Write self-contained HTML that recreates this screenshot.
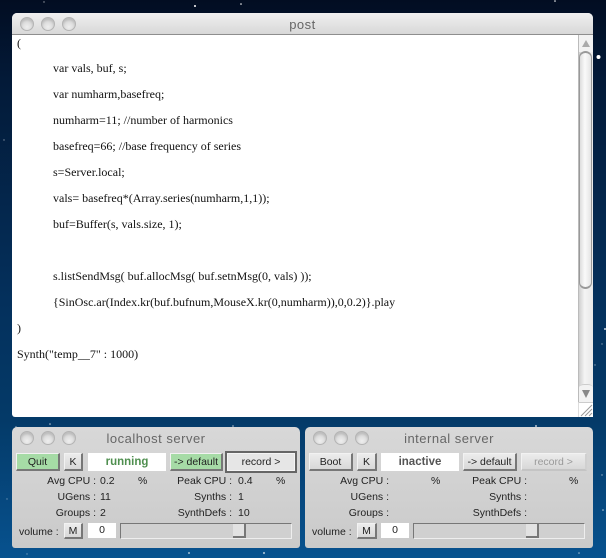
<!DOCTYPE html>
<html>
<head>
<meta charset="utf-8">
<style>
html,body{margin:0;padding:0}
body{width:606px;height:558px;position:relative;overflow:hidden;font-family:"Liberation Sans",sans-serif;background:linear-gradient(180deg,#020d22 0,#031a38 80px,#04305c 300px,#043a68 420px,#07528f 558px)}
div{position:absolute;box-sizing:border-box}
.win{border-radius:5px 5px 3px 3px}
.tb{left:0;right:0;top:0;height:22px;background:linear-gradient(#f0f0f0,#d8d8d8);border-bottom:1px solid #8e8e8e;border-radius:5px 5px 0 0}
.title{left:0;right:0;text-align:center;color:#666;font-size:13px;letter-spacing:.5px;white-space:nowrap}
.dot{width:14px;height:14px;border-radius:50%;background:radial-gradient(circle at 50% 75%,#eeeeee,#d2d2d2 75%);border:1px solid #b4b4b4;box-shadow:inset 0 2px 2px #bbb}
.code{left:17px;font:12px/14px "Liberation Serif",serif;color:#111;white-space:pre}
.srv{height:121px;width:288px;top:427px;border-radius:5px 5px 3px 3px;background:linear-gradient(#d8d8d8,#cacaca)}
.btn{background:linear-gradient(#ececec,#d8d8d8);border-right:2px solid #777;border-bottom:2px solid #777;border-top:1px solid #f2f2f2;border-left:1px solid #f2f2f2;height:18px;font-size:10.500px;line-height:16px;text-align:center;color:#222;white-space:nowrap}
.gr{background:#a6dba6}
.l{font-size:10.500px;line-height:14px;color:#222;white-space:nowrap}
.r{text-align:right;width:120px}
.wh{background:#fff;text-align:center;white-space:nowrap}
</style>
</head>
<body>
<svg style="position:absolute;left:0;top:0" width="606" height="558">
<g fill="#fff">
<circle cx="195" cy="6" r="1" /><circle cx="241" cy="4" r=".8"/><circle cx="44" cy="2" r=".7" opacity=".6"/><circle cx="598.500" cy="57" r="2"/><circle cx="555" cy="1" r=".8"/><circle cx="4" cy="140" r=".7" opacity=".5"/><circle cx="605" cy="329" r="1" opacity=".8"/><circle cx="602" cy="344" r=".7" opacity=".5"/><circle cx="595" cy="365" r=".7" opacity=".5"/><circle cx="50" cy="424" r=".8" opacity=".7"/><circle cx="16" cy="427" r=".7" opacity=".6"/><circle cx="233" cy="426" r=".8" opacity=".7"/><circle cx="536" cy="426" r="1" opacity=".7"/><circle cx="189" cy="553" r=".9" opacity=".8"/><circle cx="264" cy="553" r="1.100" opacity=".6"/><circle cx="579" cy="553" r=".8" opacity=".6"/><circle cx="603" cy="510" r=".8" opacity=".7"/><circle cx="602" cy="475" r=".7" opacity=".6"/><circle cx="7" cy="499" r=".7" opacity=".4"/><circle cx="27" cy="554" r=".7" opacity=".4"/>
</g>
</svg>

<!-- post window -->
<div class="win" style="left:12px;top:13px;width:581px;height:404px;background:#fff">
  <div class="tb"></div>
  <div class="dot" style="left:8px;top:4px"></div>
  <div class="dot" style="left:29px;top:4px"></div>
  <div class="dot" style="left:50px;top:4px"></div>
  <div class="title" style="top:4px">post</div>
</div>
<div class="code" style="top:36px">(</div>
<div class="code" style="top:61px;left:53px">var vals, buf, s;</div>
<div class="code" style="top:87px;left:53px">var numharm,basefreq;</div>
<div class="code" style="top:113px;left:53px">numharm=11; //number of harmonics</div>
<div class="code" style="top:139px;left:53px">basefreq=66; //base frequency of series</div>
<div class="code" style="top:165px;left:53px">s=Server.local;</div>
<div class="code" style="top:191px;left:53px">vals= basefreq*(Array.series(numharm,1,1));</div>
<div class="code" style="top:217px;left:53px">buf=Buffer(s, vals.size, 1);</div>
<div class="code" style="top:269px;left:53px">s.listSendMsg( buf.allocMsg( buf.setnMsg(0, vals) ));</div>
<div class="code" style="top:295px;left:53px">{SinOsc.ar(Index.kr(buf.bufnum,MouseX.kr(0,numharm)),0,0.2)}.play</div>
<div class="code" style="top:321px">)</div>
<div class="code" style="top:347px">Synth("temp__7" : 1000)</div>

<!-- scrollbar -->
<div style="left:578px;top:35px;width:15px;height:367px;background:linear-gradient(90deg,#cfcfcf,#f4f4f4 40%,#e8e8e8);border-left:1px solid #bbb"></div>
<div style="left:579px;top:35px;width:14px;height:17px;background:#f2f2f2"></div>
<svg style="position:absolute;left:579px;top:38px" width="14" height="10"><path d="M7 2 L11 9 L3 9Z" fill="#aaa"/></svg>
<div style="left:579px;top:51px;width:13px;height:238px;border:1px solid #999;border-top:2px solid #999;border-bottom:2px solid #999;border-radius:7px;background:linear-gradient(90deg,#ddd,#fafafa 45%,#e4e4e4)"></div>
<div style="left:579px;top:384px;width:14px;height:18px;background:#f2f2f2;border-top:1px solid #ccc;border-radius:40% 40% 0 0/18% 18% 0 0"></div>
<svg style="position:absolute;left:579px;top:388px" width="14" height="12"><path d="M7 10 L11 2 L3 2Z" fill="#888"/></svg>
<div style="left:578px;top:402px;width:15px;height:15px;background:#fff;border-top:1px solid #ccc;border-left:1px solid #ddd"></div>
<svg style="position:absolute;left:578px;top:402px" width="15" height="15"><path d="M3 14 L14 3 M7 14 L14 7 M11 14 L14 11" stroke="#999" fill="none"/></svg>

<!-- localhost -->
<div class="srv" style="left:12px"></div>
<div class="dot" style="left:20px;top:431px"></div>
<div class="dot" style="left:41px;top:431px"></div>
<div class="dot" style="left:62px;top:431px"></div>
<div class="title" style="left:12px;width:288px;right:auto;top:431px">localhost server</div>
<div class="btn gr" style="left:16px;top:453px;width:44px">Quit</div>
<div class="btn" style="left:64px;top:453px;width:19px">K</div>
<div class="wh" style="left:88px;top:453px;width:78px;height:18px;font:bold 11.500px/18px 'Liberation Sans',sans-serif;color:#4f8f4f">running</div>
<div class="btn gr" style="left:170px;top:453px;width:53px">-&gt; default</div>
<div class="btn" style="left:225px;top:451px;width:72px;height:22px;border:2px solid #666;line-height:18px;background:#e6e6e6;box-shadow:inset 0 0 0 1px #f4f4f4">record &gt;</div>

<div class="l r" style="left:-24px;top:474px">Avg CPU :</div><div class="l" style="left:100px;top:474px">0.2</div><div class="l" style="left:138px;top:474px">%</div>
<div class="l r" style="left:-24px;top:490px">UGens :</div><div class="l" style="left:100px;top:490px">11</div>
<div class="l r" style="left:-24px;top:506px">Groups :</div><div class="l" style="left:100px;top:506px">2</div>
<div class="l r" style="left:112px;top:474px">Peak CPU :</div><div class="l" style="left:238px;top:474px">0.4</div><div class="l" style="left:276px;top:474px">%</div>
<div class="l r" style="left:112px;top:490px">Synths :</div><div class="l" style="left:238px;top:490px">1</div>
<div class="l r" style="left:112px;top:506px">SynthDefs :</div><div class="l" style="left:238px;top:506px">10</div>

<div class="l" style="left:19px;top:525px">volume :</div>
<div class="btn" style="left:64px;top:523px;width:19px;height:16px;line-height:14px">M</div>
<div class="wh" style="left:88px;top:523px;width:28px;height:15px;font-size:10.500px;line-height:14px;color:#222">0</div>
<div style="left:120px;top:523px;width:172px;height:16px;border:1px solid #eee;border-top-color:#777;border-left-color:#777;background:#d0d0d0"></div>
<div style="left:233px;top:524px;width:13px;height:14px;background:#e2e2e2;border-right:2px solid #777;border-bottom:2px solid #777"></div>

<!-- internal -->
<div class="srv" style="left:305px"></div>
<div class="dot" style="left:313px;top:431px"></div>
<div class="dot" style="left:334px;top:431px"></div>
<div class="dot" style="left:355px;top:431px"></div>
<div class="title" style="left:305px;width:288px;right:auto;top:431px">internal server</div>
<div class="btn" style="left:309px;top:453px;width:44px">Boot</div>
<div class="btn" style="left:357px;top:453px;width:20px">K</div>
<div class="wh" style="left:381px;top:453px;width:78px;height:18px;font:bold 11.500px/18px 'Liberation Sans',sans-serif;color:#555">inactive</div>
<div class="btn" style="left:463px;top:453px;width:54px">-&gt; default</div>
<div class="btn" style="left:521px;top:453px;width:66px;color:#999;border-right-color:#d0d0d0;border-bottom-color:#c4c4c4">record &gt;</div>

<div class="l r" style="left:269px;top:474px">Avg CPU :</div><div class="l" style="left:431px;top:474px">%</div>
<div class="l r" style="left:269px;top:490px">UGens :</div>
<div class="l r" style="left:269px;top:506px">Groups :</div>
<div class="l r" style="left:407px;top:474px">Peak CPU :</div><div class="l" style="left:569px;top:474px">%</div>
<div class="l r" style="left:407px;top:490px">Synths :</div>
<div class="l r" style="left:407px;top:506px">SynthDefs :</div>

<div class="l" style="left:312px;top:525px">volume :</div>
<div class="btn" style="left:357px;top:523px;width:20px;height:16px;line-height:14px">M</div>
<div class="wh" style="left:381px;top:523px;width:28px;height:15px;font-size:10.500px;line-height:14px;color:#222">0</div>
<div style="left:413px;top:523px;width:172px;height:16px;border:1px solid #eee;border-top-color:#777;border-left-color:#777;background:#d0d0d0"></div>
<div style="left:526px;top:524px;width:13px;height:14px;background:#e2e2e2;border-right:2px solid #777;border-bottom:2px solid #777"></div>
</body>
</html>
